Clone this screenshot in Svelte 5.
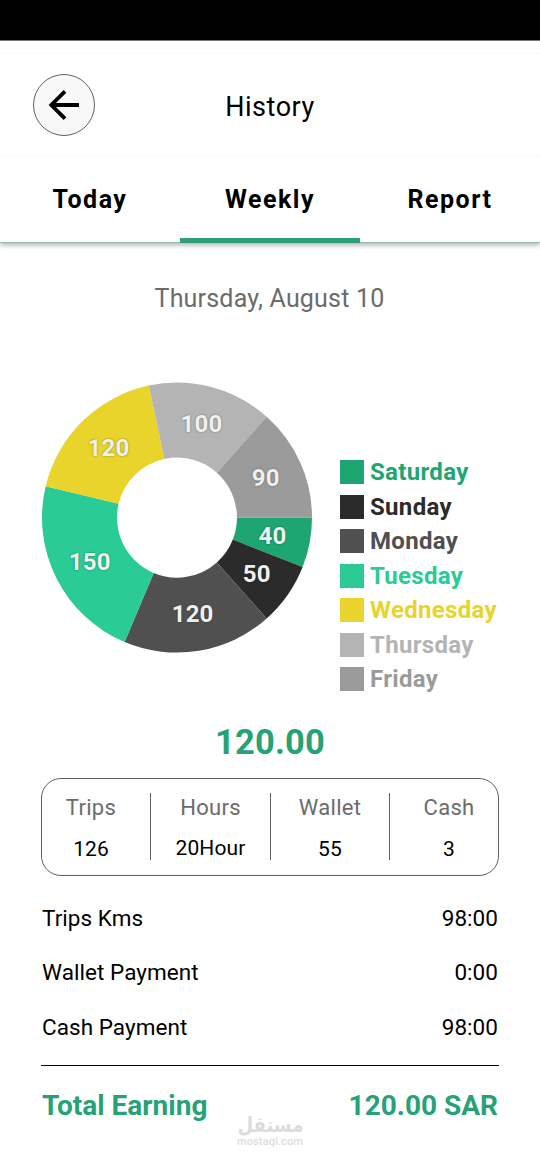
<script>
  const days = [
    { name: 'Saturday', value: 40, color: '#1ea672' },
    { name: 'Sunday', value: 50, color: '#2b2b2b' },
    { name: 'Monday', value: 120, color: '#505050' },
    { name: 'Tuesday', value: 150, color: '#2acb94' },
    { name: 'Wednesday', value: 120, color: '#e8d42b' },
    { name: 'Thursday', value: 100, color: '#b4b4b4' },
    { name: 'Friday', value: 90, color: '#9b9b9b' }
  ];
  const stats = [
    { label: 'Trips', value: '126' },
    { label: 'Hours', value: '20Hour' },
    { label: 'Wallet', value: '55' },
    { label: 'Cash', value: '3' }
  ];
  const rows = [
    { label: 'Trips Kms', value: '98:00' },
    { label: 'Wallet Payment', value: '0:00' },
    { label: 'Cash Payment', value: '98:00' }
  ];
  const tabs = ['Today', 'Weekly', 'Report'];
  const active = 'Weekly';

  const outer = 135;
  const inner = 60;
  const total = days.reduce((sum, d) => sum + d.value, 0);
  const at = (r, a) => `${(outer + r * Math.cos(a)).toFixed(2)} ${(outer + r * Math.sin(a)).toFixed(2)}`;
  let angle = 0;
  const slices = days.map((d) => {
    const a = angle;
    const b = a + (d.value / total) * Math.PI * 2;
    angle = b;
    const mid = (a + b) / 2;
    return {
      ...d,
      path: `M${at(outer, a)}A${outer} ${outer} 0 0 1 ${at(outer, b)}L${at(inner, b)}A${inner} ${inner} 0 0 0 ${at(inner, a)}Z`,
      x: outer + 97.5 * Math.cos(mid),
      y: outer + 97.5 * Math.sin(mid)
    };
  });
</script>

<div class="screen">
  <div class="status"></div>
  <header>
    <button class="back" aria-label="Back">
      <svg width="32" height="32" viewBox="0 0 32 32"><path d="M31 16H4M17 2.3L3.3 16L17 29.7" fill="none" stroke="#000" stroke-width="3.8" /></svg>
    </button>
    <h1>History</h1>
  </header>
  <nav>
    {#each tabs as tab}
      <div class="tab" class:active={tab === active}>{tab}</div>
    {/each}
  </nav>
  <main>
    <p class="date">Thursday, August 10</p>
    <section class="chart">
      <svg class="donut" width="270" height="270" viewBox="0 0.4 270 270">
        {#each slices as s}
          <path d={s.path} fill={s.color} />
        {/each}
        {#each slices as s}
          <text x={s.x - 0.3} y={s.y + 8.4} text-anchor="middle">{s.value}</text>
        {/each}
      </svg>
      <ul>
        {#each days as d}
          <li style="color: {d.color}"><i></i><span>{d.name}</span></li>
        {/each}
      </ul>
    </section>
    <div class="amount">120.00</div>
    <section class="stats">
      {#each stats as s}
        <div class="stat"><span>{s.label}</span><b>{s.value}</b></div>
      {/each}
    </section>
    <section class="rows">
      {#each rows as r}
        <div class="row"><span>{r.label}</span><span>{r.value}</span></div>
      {/each}
    </section>
    <div class="total"><span>Total Earning</span><span>120.00 SAR</span></div>
  </main>
  <div class="mark"><span class="ar" lang="ar" dir="rtl">مستقل</span><span class="en">mostaql.com</span></div>
</div>

<style>
  :global(body) { background: #fff; }
  .screen {
    position: relative;
    width: 540px;
    height: 1170px;
    overflow: hidden;
    background: #fff;
    font-family: Roboto, sans-serif;
    color: #000;
    box-sizing: border-box;
  }
  .status { height: 40px; background: #000; border-bottom: 1px solid #777; }
  header {
    display: grid;
    grid-template-columns: 62px 1fr 62px;
    align-items: center;
    height: 104px;
    margin-top: 12px;
    padding: 0 33px;
    box-sizing: border-box;
    border-top: 1px solid #fafafa;
    border-bottom: 1px solid #fafafa;
  }
  .back {
    display: flex;
    align-items: center;
    justify-content: center;
    width: 62px;
    height: 62px;
    padding: 0;
    border: 1px solid #606060;
    border-radius: 50%;
    background: #f8f8f8;
  }
  h1 {
    margin: 0;
    padding-top: 4px;
    text-align: center;
    font-size: 27px;
    font-weight: 400;
    line-height: 32px;
    letter-spacing: 0.5px;
  }
  nav {
    display: grid;
    grid-template-columns: repeat(3, 1fr);
    height: 86px;
    box-sizing: border-box;
    border-bottom: 1px solid #8fbfac;
    box-shadow: 0 2px 5px rgba(0, 0, 0, 0.32);
    clip-path: inset(0 0 -12px 0);
  }
  .tab {
    height: 86px;
    box-sizing: border-box;
    padding-top: 28px;
    border-bottom: 5px solid transparent;
    text-align: center;
    font-size: 25px;
    font-weight: 700;
    line-height: 29px;
    letter-spacing: 1.5px;
  }
  .tab.active { border-color: #2f9f76; }
  main { padding: 41px 42px 0; }
  .date {
    margin: 0 0 0 -1px;
    text-align: center;
    font-size: 25px;
    line-height: 30px;
    letter-spacing: 0.2px;
    color: #6b6b6b;
  }
  .chart {
    display: flex;
    align-items: flex-start;
    gap: 28px;
    margin-top: 68.5px;
  }
  .donut { display: block; flex: none; overflow: visible; }
  .donut text {
    font-size: 24px;
    font-weight: 700;
    letter-spacing: 0.2px;
    fill: #f0f0f0;
    text-shadow: 0 0 2px rgba(0, 0, 0, 0.45);
  }
  ul { margin: 77.5px 0 0; padding: 0; list-style: none; }
  li {
    display: flex;
    align-items: center;
    gap: 6px;
    height: 24px;
    margin-bottom: 10.5px;
    font-size: 24px;
    font-weight: 700;
    line-height: 24px;
    letter-spacing: 0.32px;
  }
  li i { width: 24px; height: 24px; background: currentColor; }
  .amount {
    margin-top: 19px;
    text-align: center;
    font-size: 34.5px;
    font-weight: 700;
    line-height: 42px;
    letter-spacing: 0.2px;
    color: #27a276;
  }
  .stats {
    display: grid;
    grid-template-columns: 108px 120px 119px 1fr;
    align-items: center;
    height: 98px;
    margin: 15px -1px 0;
    box-sizing: border-box;
    border: 1px solid #606060;
    border-radius: 20px;
  }
  .stat {
    display: flex;
    flex-direction: column;
    align-items: center;
    gap: 15px;
    height: 67px;
    padding-top: 2px;
    box-sizing: border-box;
    border-left: 1px solid #606060;
  }
  .stat:first-child { border: 0; padding-right: 10px; }
  .stat:last-child { padding-left: 10px; }
  .stat span { font-size: 22px; line-height: 26px; letter-spacing: 0.3px; color: #6b6b6b; }
  .stat b { font-size: 21px; font-weight: 400; line-height: 26px; letter-spacing: 0.1px; }
  .stat:nth-child(2) b { margin-top: -1px; }
  .rows { display: grid; gap: 28.5px; margin-top: 29px; }
  .row, .total { display: flex; justify-content: space-between; }
  .row { font-size: 22.5px; line-height: 26px; letter-spacing: 0.05px; }
  .total {
    margin: 25px -1px 0;
    padding: 24px 1px 0;
    border-top: 1px solid #000;
    font-size: 28px;
    font-weight: 700;
    line-height: 32px;
    color: #27a276;
  }
  .mark {
    position: absolute;
    left: 229px;
    top: 1115px;
    width: 82px;
    display: flex;
    flex-direction: column;
    align-items: center;
    color: #dcdcdc;
  }
  .ar {
    font-family: "DejaVu Sans", sans-serif;
    font-size: 21px;
    font-weight: 700;
    line-height: 20px;
    white-space: nowrap;
    transform: scaleX(0.86);
  }
  .en { margin-top: 1px; font-size: 11px; font-weight: 500; line-height: 12px; letter-spacing: 0.1px; }
</style>
